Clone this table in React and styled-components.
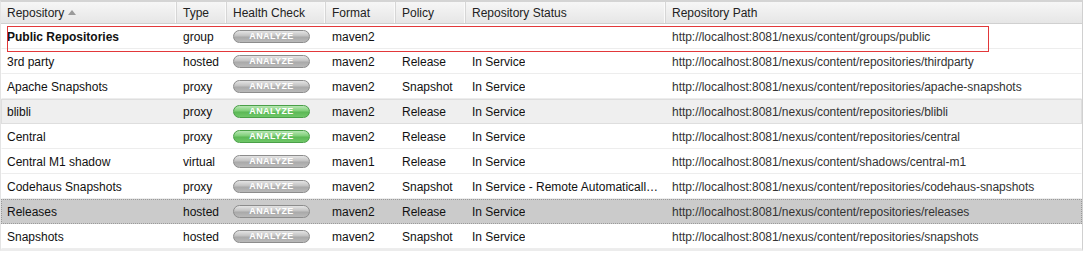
import React from 'react'
import styled, { createGlobalStyle, css } from 'styled-components'

const GlobalStyle = createGlobalStyle`
  body {
    margin: 0;
    background: #fff;
    font-family: "Liberation Sans", Arial, sans-serif;
  }
`

const COLS = '176px 50px 99px 70px 70px 200px 417px'

const Grid = styled.div`
  position: relative;
  width: 1083px;
  border-top: 2px solid #d4d4d4;
  border-right: 1px solid #d0d0d0;
  border-left: 1px solid #e4e4e4;
  border-bottom: 2px solid #ececec;
  box-sizing: border-box;
  font-size: 12px;
`

const HeaderRow = styled.div`
  display: grid;
  grid-template-columns: ${COLS};
  height: 21px;
  background: linear-gradient(#f6f6f6, #e6e6e6);
  border-bottom: 1px solid #d0d0d0;
`

const HeaderCell = styled.div`
  display: flex;
  align-items: center;
  gap: 4px;
  padding-left: 6px;
  color: #222;
  border-right: 1px solid #d6d6d6;
  box-shadow: inset -1px 0 0 #fafafa;
  &:last-child {
    border-right: none;
    box-shadow: none;
  }
`

const SortArrow = styled.span`
  width: 0;
  height: 0;
  border-left: 4px solid transparent;
  border-right: 4px solid transparent;
  border-bottom: 5px solid #9a9a9a;
  margin-top: -1px;
`

const Row = styled.div`
  display: grid;
  grid-template-columns: ${COLS};
  height: 25px;
  box-sizing: border-box;
  border: 1px solid transparent;
  border-top-color: #fff;
  border-bottom-color: #ededed;
  background: #fff;
  ${p => p.$over && css`
    background: #efefef;
    border-color: #dedede;
  `}
  ${p => p.$selected && css`
    background: #cbcbcb;
    border: 1px dotted #9a9a9a;
  `}
`

const Cell = styled.div`
  display: flex;
  align-items: center;
  padding-left: 5px;
  color: ${p => (p.$path ? '#333' : '#111')};
  font-weight: ${p => (p.$bold ? 'bold' : 'normal')};
  letter-spacing: ${p => (p.$path ? '-0.04px' : 'normal')};
  white-space: nowrap;
  overflow: hidden;
  min-width: 0;
`

const Ellipsis = styled.span`
  display: block;
  max-width: 188px;
  overflow: hidden;
  text-overflow: ellipsis;
`

const AnalyzeButton = styled.button`
  width: 77px;
  height: 13px;
  padding: 0;
  border-radius: 7px;
  font-family: "Liberation Sans", Arial, sans-serif;
  font-size: 9px;
  font-weight: bold;
  letter-spacing: 0.4px;
  line-height: 11px;
  color: #fff;
  cursor: pointer;
  ${p => p.$active ? css`
    border: 1px solid #4a9f48;
    background: linear-gradient(#b8e6b4 0%, #7fcf78 45%, #5cb856 55%, #6fc768 100%);
  ` : css`
    border: 1px solid #8c8c8c;
    background: linear-gradient(#e4e4e4 0%, #c2c2c2 45%, #a9a9a9 55%, #b9b9b9 100%);
  `}
`

const FocusBox = styled.div`
  position: absolute;
  left: 6px;
  top: 24px;
  width: 982px;
  height: 26px;
  border: 1px solid #e2383a;
  box-sizing: border-box;
  pointer-events: none;
`

const columns = ['Repository', 'Type', 'Health Check', 'Format', 'Policy', 'Repository Status', 'Repository Path']

const base = 'http://localhost:8081/nexus/content/'

const repos = [
  { name: 'Public Repositories', type: 'group', format: 'maven2', policy: '', status: '', path: 'groups/public', bold: true },
  { name: '3rd party', type: 'hosted', format: 'maven2', policy: 'Release', status: 'In Service', path: 'repositories/thirdparty' },
  { name: 'Apache Snapshots', type: 'proxy', format: 'maven2', policy: 'Snapshot', status: 'In Service', path: 'repositories/apache-snapshots' },
  { name: 'blibli', type: 'proxy', format: 'maven2', policy: 'Release', status: 'In Service', path: 'repositories/blibli', active: true, over: true },
  { name: 'Central', type: 'proxy', format: 'maven2', policy: 'Release', status: 'In Service', path: 'repositories/central', active: true },
  { name: 'Central M1 shadow', type: 'virtual', format: 'maven1', policy: 'Release', status: 'In Service', path: 'shadows/central-m1' },
  { name: 'Codehaus Snapshots', type: 'proxy', format: 'maven2', policy: 'Snapshot', status: 'In Service - Remote Automatically Blocked and Available', path: 'repositories/codehaus-snapshots' },
  { name: 'Releases', type: 'hosted', format: 'maven2', policy: 'Release', status: 'In Service', path: 'repositories/releases', selected: true },
  { name: 'Snapshots', type: 'hosted', format: 'maven2', policy: 'Snapshot', status: 'In Service', path: 'repositories/snapshots' },
]

const App = () => {
  return (
    <>
      <GlobalStyle />
      <Grid>
        <HeaderRow>
          {columns.map((c, i) => (
            <HeaderCell key={c}>
              {c}
              {i === 0 && <SortArrow />}
            </HeaderCell>
          ))}
        </HeaderRow>
        {repos.map(r => (
          <Row key={r.name} $over={r.over} $selected={r.selected}>
            <Cell $bold={r.bold}>{r.name}</Cell>
            <Cell>{r.type}</Cell>
            <Cell>
              <AnalyzeButton $active={r.active}>ANALYZE</AnalyzeButton>
            </Cell>
            <Cell>{r.format}</Cell>
            <Cell>{r.policy}</Cell>
            <Cell><Ellipsis>{r.status}</Ellipsis></Cell>
            <Cell $path>{base + r.path}</Cell>
          </Row>
        ))}
        <FocusBox />
      </Grid>
    </>
  )
}

export default App
